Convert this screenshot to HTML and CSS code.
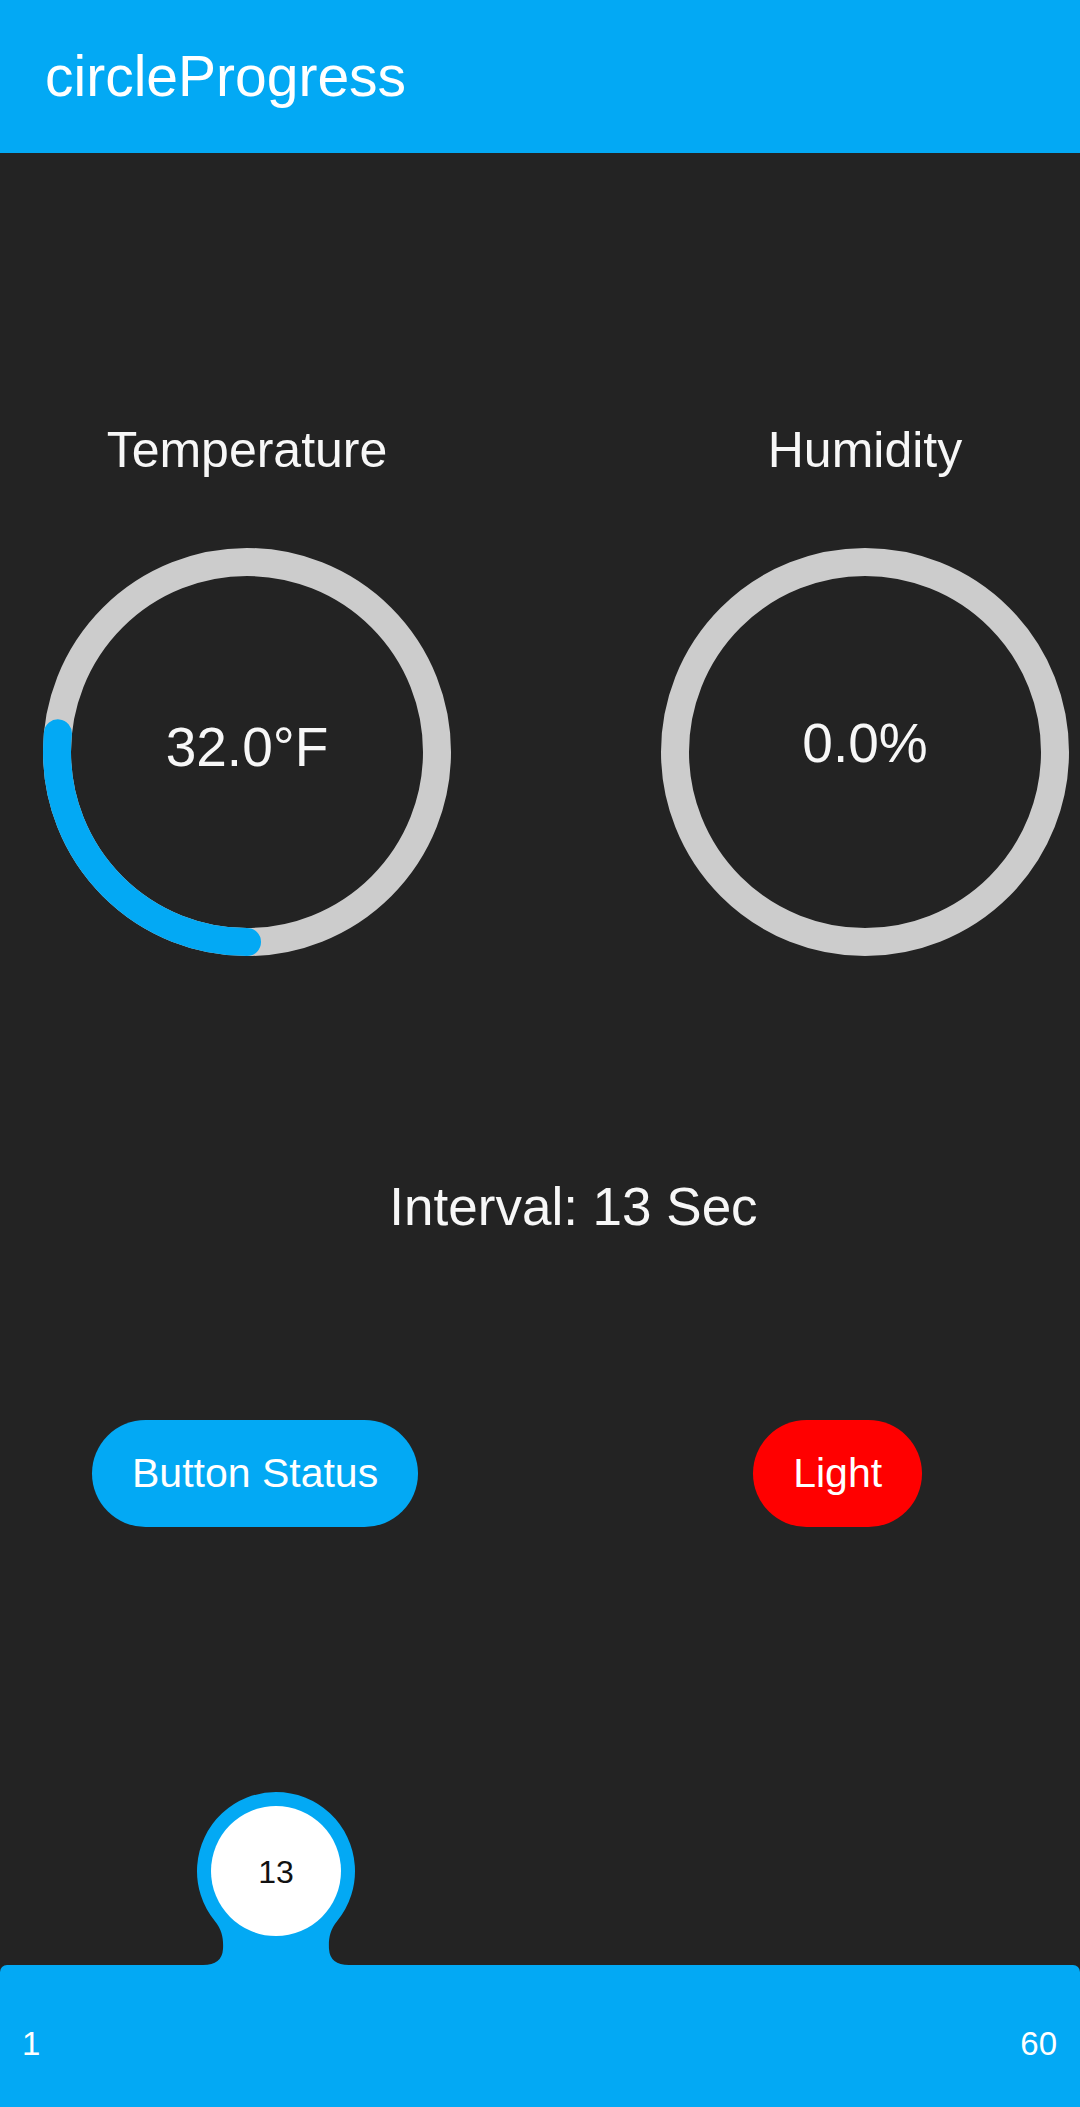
FILE: index.html
```html
<!DOCTYPE html>
<html>
<head>
<meta charset="utf-8">
<title>circleProgress</title>
<link rel="stylesheet" href="styles.css">
</head>
<body>
<div class="app">
  <header class="appbar"><h1 class="appbar-title">circleProgress</h1></header>
  <main class="content">
    <section class="gauges">
      <div class="gauge">
        <div class="gauge-label">Temperature</div>
        <div class="dial">
          <svg class="dial-svg" width="408" height="408" viewBox="0 0 408 408">
            <circle class="ring-track" cx="204" cy="204" r="190"/>
            <circle class="ring-value" cx="204" cy="204" r="190" stroke-dasharray="317 2000" transform="rotate(90 204 204)"/>
          </svg>
          <div class="dial-value">32.0°F</div>
        </div>
      </div>
      <div class="gauge">
        <div class="gauge-label">Humidity</div>
        <div class="dial">
          <svg class="dial-svg" width="408" height="408" viewBox="0 0 408 408">
            <circle class="ring-track" cx="204" cy="204" r="190"/>
          </svg>
          <div class="dial-value dial-value-alt">0.0%</div>
        </div>
      </div>
    </section>
    <div class="interval">Interval: 13 Sec</div>
    <div class="actions">
      <button class="pill pill-blue">Button Status</button>
      <button class="pill pill-red">Light</button>
    </div>
  </main>
  <footer class="slider">
    <svg class="slider-knob" width="200" height="200" viewBox="0 0 200 200">
      <path class="knob-shape" d="M 0,200 L 0,194 L 27,194 Q 46,194 47,178 C 47.5,168 46.4,159.3 38.8,150 A 79 79 0 1 1 161.2,150 C 153.6,159.3 152.5,168 153,178 Q 154,194 173,194 L 200,194 L 200,200 Z"/>
      <circle class="knob-face" cx="100" cy="100" r="65"/>
      <text class="knob-text" x="100" y="112" text-anchor="middle">13</text>
    </svg>
    <span class="slider-min">1</span>
    <span class="slider-max">60</span>
  </footer>
</div>
</body>
</html>
```

FILE: styles.css
```css
* { box-sizing: border-box; }

html, body {
  margin: 0;
  padding: 0;
  background: #232323;
  font-family: "Liberation Sans", Arial, sans-serif;
  color: #f7f7f7;
}

.app {
  height: 100vh;
  display: flex;
  flex-direction: column;
  overflow: hidden;
}

.appbar {
  height: 153px;
  flex: 0 0 153px;
  background: #03a9f4;
  padding-left: 45px;
}

.appbar-title {
  margin: 0;
  font-size: 57px;
  font-weight: normal;
  line-height: 153px;
  color: #ffffff;
}

.content {
  flex: 1;
  display: flex;
  flex-direction: column;
}

.gauges {
  display: flex;
  padding-top: 267px;
  padding-left: 43px;
  gap: 210px;
}

.gauge {
  width: 408px;
  display: flex;
  flex-direction: column;
  align-items: center;
}

.gauge-label {
  font-size: 50px;
  line-height: 60px;
  margin-bottom: 68px;
}

.dial {
  width: 408px;
  height: 408px;
  display: grid;
}

.dial-svg,
.dial-value {
  grid-area: 1 / 1;
}

.dial-value {
  place-self: center;
  font-size: 55px;
  line-height: 55px;
  margin-bottom: 10px;
}

.dial-value-alt {
  margin-bottom: 18px;
}

.ring-track {
  fill: none;
  stroke: #cccccc;
  stroke-width: 28;
}

.ring-value {
  fill: none;
  stroke: #03a9f4;
  stroke-width: 28;
  stroke-linecap: round;
}

.interval {
  margin-top: 219px;
  padding-left: 67px;
  text-align: center;
  font-size: 53px;
  line-height: 64px;
}

.actions {
  margin-top: 181px;
  display: flex;
  padding-left: 92px;
  gap: 335px;
}

.pill {
  border: none;
  height: 107px;
  padding: 0 40px;
  border-radius: 54px;
  font-family: "Liberation Sans", Arial, sans-serif;
  font-size: 41px;
  line-height: 107px;
  color: #ffffff;
}

.pill-blue { background: #03a9f4; }
.pill-red { background: #ff0000; }

.slider {
  position: relative;
  flex: 0 0 142px;
  height: 142px;
  background: #03a9f4;
  border-radius: 7px 7px 0 0;
  display: flex;
  justify-content: space-between;
  padding: 62px 23px 0 22px;
  font-size: 33px;
  line-height: 33px;
  color: #ffffff;
}

.slider-knob {
  position: absolute;
  left: 176px;
  top: -194px;
}

.knob-shape { fill: #03a9f4; }
.knob-face { fill: #ffffff; }

.knob-text {
  font-family: "Liberation Sans", Arial, sans-serif;
  font-size: 32px;
  fill: #111111;
}
```
